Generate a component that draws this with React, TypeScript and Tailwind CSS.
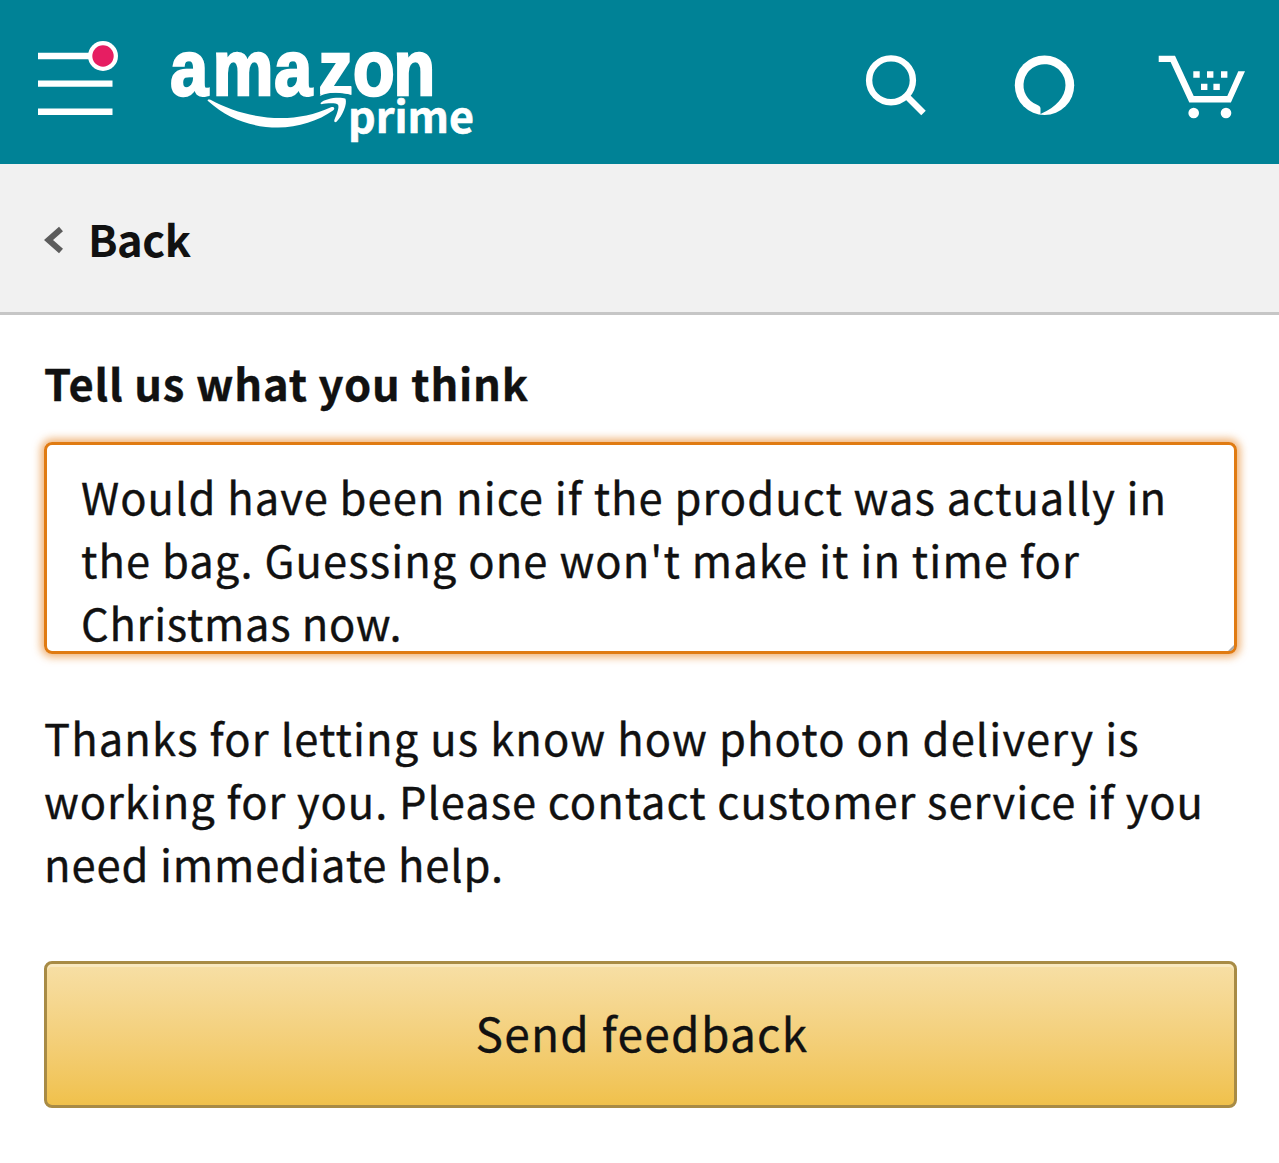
import React from "react";

const feedback = [
    { text: "Would have been nice if the product was actually in", className: "tracking-[1.03px]" },
    { text: "the bag. Guessing one won't make it in time for", className: "tracking-[1.09px]" },
    { text: "Christmas now.", className: "tracking-[0.7px]" },
];

const thanks = [
    { text: "Thanks for letting us know how photo on delivery is", className: "tracking-[1.13px]" },
    { text: "working for you. Please contact customer service if you", className: "tracking-[0.97px]" },
    { text: "need immediate help.", className: "tracking-[0.9px]" },
];

const Lines: React.FC<{lines: any[]}> = ({ lines }: any) => (
    <>
        {lines.map((line: any) => (
            <span className={`block w-fit whitespace-nowrap ${line.className}`} key={line.text}>{line.text}</span>
        ))}
    </>
);

const MenuIcon: React.FC = () => (
    <svg className="h-[80px] w-[84px]" viewBox="36 38 84 80">
        <path d="M38 56h74.5M38 83.6h74.5M38 111.7h74.5" stroke="#fff" strokeWidth="6.4" />
        <circle cx="103" cy="56" r="15" fill="#fff" />
        <circle cx="103" cy="56" r="10.7" fill="#e61e62" />
    </svg>
);

const Logo: React.FC = () => (
    <svg className="ml-[46px] h-[120px] w-[320px] overflow-visible" viewBox="166 38 320 120" fill="#fff">
        <text x="192.5 240.5 310 360 399 444.500" y="95" transform="scale(0.885 1)" stroke="#fff" strokeWidth="2.6"
            className="font-['Liberation_Sans',sans-serif] text-[77px] font-bold">amazon</text>
        {/* notch under the z */}
        <path d="M317 101V95.500C328 91.500 342 92 353.500 95V101Z" fill="#008296" />
        <path d="M319.700 96C329 91.500 342 91.500 351.300 95V87H325Z" />
        <text x="348" y="133" textLength="126" lengthAdjust="spacingAndGlyphs" stroke="#fff" strokeWidth="0.6"
            className="font-['Noto_Sans_CJK_JP',sans-serif] text-[43px] font-bold">prime</text>
        <path d="M208 101C228 119 252 127.500 278 127.500C298 127.500 319 120.500 333 110.500C335.500 108.500 334 106 331 107.200C315 114.500 298 118 281 118C255 118 231 111 210.500 99.800C208 98.800 207 100 208 101Z" />
        <path d="M320.300 103.300C325 98 340 96.500 345.500 98.800C347.500 104 342.500 116 336.500 121.700C334.800 123 333.800 121.500 334.500 119.500C337 114 339.500 107 338 104.800C336 102.500 326 103.500 321.500 104.200Z" />
    </svg>
);

const SearchIcon: React.FC = () => (
    <svg className="h-[70px] w-[64px]" viewBox="864 50 64 70" fill="none" stroke="#fff" strokeWidth="6.4">
        <circle cx="891" cy="80.300" r="21.900" />
        <path d="M906.500 96L923.500 113" />
    </svg>
);

const AssistantIcon: React.FC = () => (
    <svg className="ml-[84px] h-[70px] w-[64px]" viewBox="1012 50 64 70">
        <circle cx="1044.500" cy="85.300" r="29.700" fill="#fff" />
        <path d="M1040.500 114V108.500C1040.500 107 1039.500 106 1037.500 105A21 21 0 1 1 1065.500 85.300C1065.500 97 1055.500 107.500 1041.500 113.500Z" fill="#008296" />
    </svg>
);

const CartIcon: React.FC = () => (
    <svg className="ml-[80px] h-[70px] w-[90px]" viewBox="1156 50 90 70" fill="#fff">
        <path d="M1158.700 55.700H1175L1193.700 96H1227.300L1238.300 71.300H1245L1230.900 102.500H1189.300L1170.600 62H1158.700Z" />
        <path d="M1193.300 71.300h6.400v6.400h-6.400zM1207 71.300h6.400v6.400h-6.400zM1221 71.300h6.400v6.400h-6.400zM1201 83.700h6.400v6.400h-6.400zM1213.400 83.700h6.400v6.400h-6.400z" />
        <circle cx="1193.700" cy="113" r="5.300" />
        <circle cx="1226" cy="113" r="5.300" />
    </svg>
);

const App: React.FC = () => (
    <div className="flex h-[1163px] w-[1279px] flex-col overflow-hidden bg-white text-[43.5px] text-[#111]
                    font-['Noto_Sans_CJK_JP','Noto_Sans',sans-serif]">
        <header className="flex h-[164px] shrink-0 items-start bg-[#008296] pl-9 text-white">
            <div className="mt-[38px] flex items-start">
                <MenuIcon />
                <Logo />
            </div>
            <nav className="mt-[50px] ml-[378px] flex shrink-0">
                <SearchIcon />
                <AssistantIcon />
                <CartIcon />
            </nav>
        </header>

        <a className="flex h-[151px] shrink-0 items-center border-b-3 border-[#c6c6c6] bg-[#f1f1f1] pt-[2px] pl-[44px] font-bold">
            <svg className="mt-[2px] h-[28px] w-[20px]" viewBox="43 226 20 28" fill="none" stroke="#5c5c5c" strokeWidth="6">
                <path d="M60 229L47.500 240L60 251" />
            </svg>
            <span className="ml-6 tracking-[-0.5px]">Back</span>
        </a>

        <main className="flex flex-col px-[44px] [-webkit-text-stroke:0.35px_#111]">
            <h1 className="mt-[36px] w-fit leading-[63px] font-bold tracking-[0.83px] whitespace-nowrap">Tell us what you think</h1>

            <div className="relative mt-[28px] h-[212px] w-[1193px] rounded-lg border-[3.5px] border-[#e07b12] pt-[21px] pl-[34px]
                            leading-[62.8px] shadow-[0_0_9px_3px_rgba(228,121,17,0.6)]">
                <Lines lines={feedback} />
                <svg className="absolute right-0 bottom-0 h-[6px] w-[6px]" viewBox="0 0 6 6">
                    <path d="M0 6L6 0V3L3 6Z" fill="#aaa" />
                </svg>
            </div>

            <p className="mt-[53px] leading-[62.8px]">
                <Lines lines={thanks} />
            </p>

            <button className="mt-[66px] h-[147px] w-[1193px] rounded-lg border-3 border-[#a88b45] bg-linear-to-b from-[#f7dfa5]
                               to-[#f0c14b] pb-1 pl-[3px] text-[46px] tracking-[1.3px] shadow-[inset_0_3px_0_rgba(255,255,255,0.3)]">
                Send feedback
            </button>
        </main>
    </div>
);

export default App;
